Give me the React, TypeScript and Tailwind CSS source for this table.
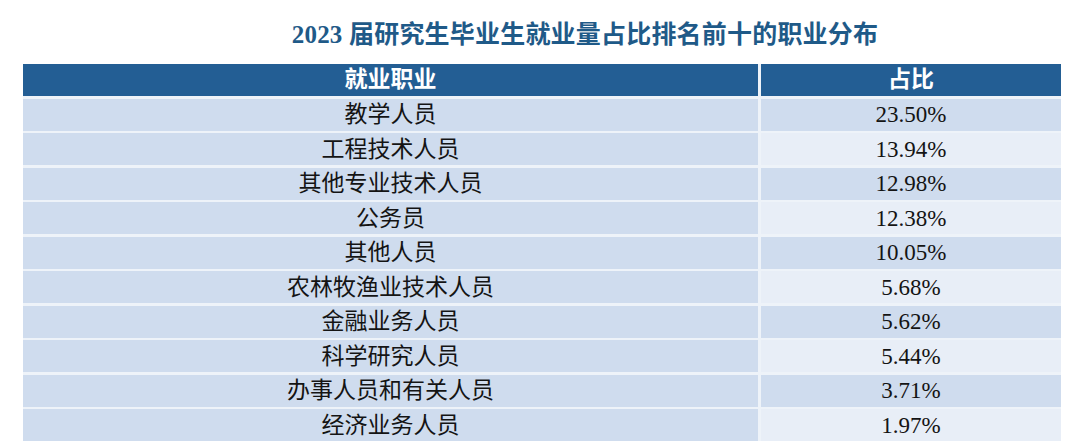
const rows: { job: string; share: string }[] = [
  { job: "教学人员", share: "23.50%" },
  { job: "工程技术人员", share: "13.94%" },
  { job: "其他专业技术人员", share: "12.98%" },
  { job: "公务员", share: "12.38%" },
  { job: "其他人员", share: "10.05%" },
  { job: "农林牧渔业技术人员", share: "5.68%" },
  { job: "金融业务人员", share: "5.62%" },
  { job: "科学研究人员", share: "5.44%" },
  { job: "办事人员和有关人员", share: "3.71%" },
  { job: "经济业务人员", share: "1.97%" },
];

const serif = "font-['Liberation_Serif','Noto_Sans_CJK_SC',serif]";

export default function App() {
  return (
    <div className="w-[1080px] h-[441px] overflow-hidden bg-white">
      <div className="flex justify-center pl-[90px] pt-[18px] h-[64px]">
        <h1
          className={`${serif} text-[25px] leading-[34px] font-bold text-[#1f5a88] tracking-[0.2px]`}
        >
          2023 届研究生毕业生就业量占比排名前十的职业分布
        </h1>
      </div>

      <div className="ml-[23px] w-[1038px] grid grid-cols-[735px_300px] gap-x-[3px] gap-y-[2.5px] bg-[#eef3f9]">
        <div
          className={`${serif} h-[32px] bg-[#235e94] text-white font-bold text-[23px] flex items-center justify-center`}
        >
          就业职业
        </div>
        <div
          className={`${serif} h-[32px] bg-[#235e94] text-white font-bold text-[23px] flex items-center justify-center`}
        >
          占比
        </div>

        {rows.map((r, i) => (
          <div key={r.job} className="contents">
            <div
              className={`${serif} h-[32px] bg-[#cfdcee] text-[#141414] text-[23px] flex items-center justify-center pt-[2px]`}
            >
              {r.job}
            </div>
            <div
              className={`${serif} h-[32px] ${
                i % 2 === 0 ? "bg-[#cfdcee]" : "bg-[#e8eef7]"
              } text-[#141414] text-[23px] flex items-center justify-center pt-[2px]`}
            >
              {r.share}
            </div>
          </div>
        ))}
      </div>
    </div>
  );
}
